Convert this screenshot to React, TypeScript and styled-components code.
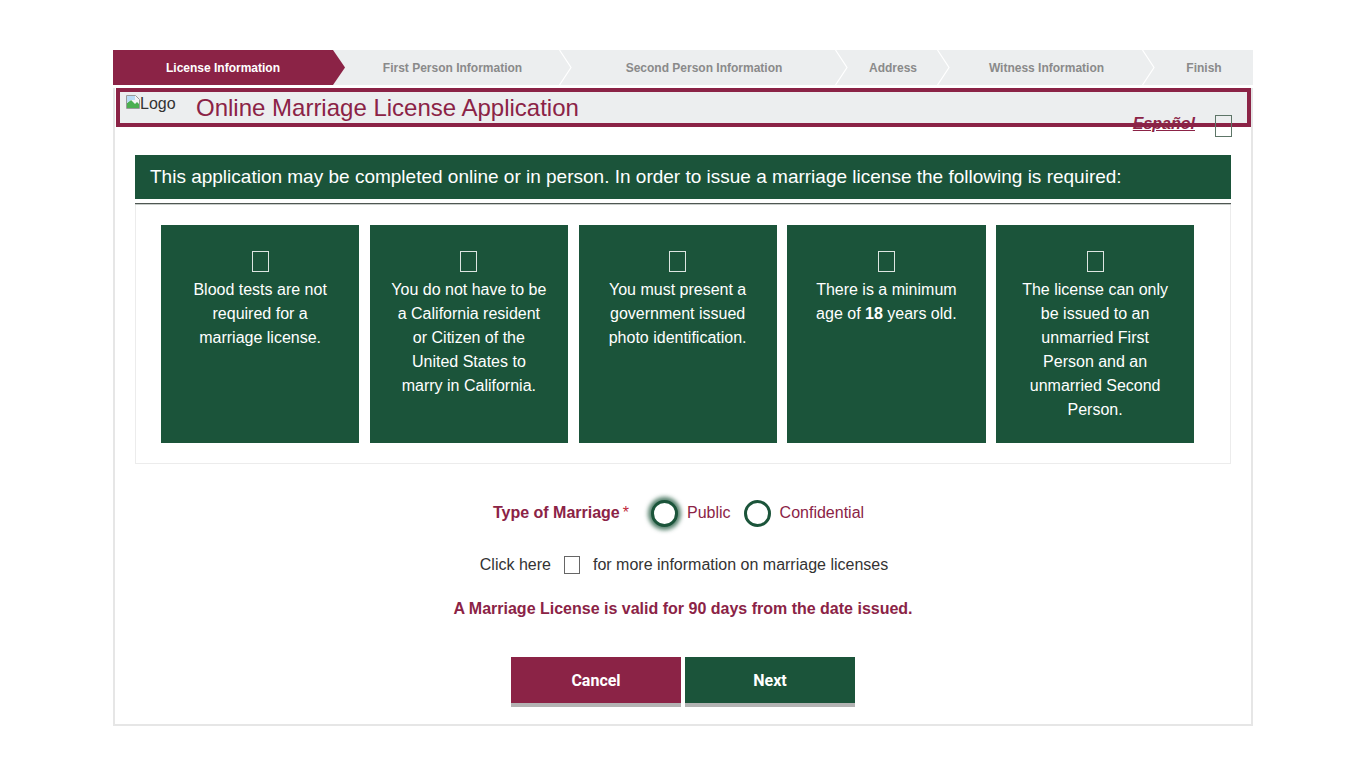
import React from "react";
import styled, { createGlobalStyle, css } from "styled-components";

const MAROON = "#8b2346";
const GREEN = "#1b543a";

const GlobalStyle = createGlobalStyle`
  html, body {
    margin: 0;
    padding: 0;
    background: #fff;
  }
  body {
    font-family: "Liberation Sans", Arial, sans-serif;
    color: #333;
  }
`;

const Page = styled.div`
  padding-top: 50px;
`;

const Container = styled.div`
  width: 1140px;
  margin: 0 auto;
`;

const StepBar = styled.div`
  display: flex;
  height: 35px;
  background: #eceeef;
`;

const Step = styled.div<{ $width: number; $active?: boolean; $last?: boolean }>`
  position: relative;
  flex: 0 0 ${(p) => p.$width}px;
  display: flex;
  align-items: center;
  justify-content: center;
  padding-right: ${(p) => (p.$last ? 0 : 12)}px;
  box-sizing: border-box;
  font-size: 12px;
  font-weight: bold;
  color: #8a8a8a;
  ${(p) =>
    p.$active &&
    css`
      background: ${MAROON};
      color: #fff;
      clip-path: polygon(
        0 0,
        calc(100% - 12px) 0,
        100% 50%,
        calc(100% - 12px) 100%,
        0 100%
      );
    `}
`;

const Chevron = styled.svg`
  position: absolute;
  right: 0;
  top: 0;
`;

const Body = styled.div`
  border: 2px solid #e6e6e6;
  border-top: none;
  padding-bottom: 17px;
`;

const TitleBox = styled.div`
  margin: 3px 0 0 1px;
  height: 39px;
  box-sizing: border-box;
  border: 4px solid ${MAROON};
  background: #eceeef;
  display: flex;
  align-items: center;
  padding-left: 5px;
`;

const Logo = styled.span`
  display: flex;
  align-items: flex-start;
  align-self: flex-start;
  margin-top: 3px;
  font-size: 16px;
  color: #333;
  width: 71px;
  svg {
    margin-right: -1px;
    margin-top: -1px;
  }
`;

const Title = styled.h1`
  margin: 0;
  font-size: 24px;
  font-weight: normal;
  color: ${MAROON};
  line-height: 28px;
`;

const LangRow = styled.div`
  display: flex;
  justify-content: flex-end;
  align-items: center;
  gap: 20px;
  margin-top: -12px;
  padding-right: 19px;
  height: 22px;
  position: relative;
`;

const LangLink = styled.a`
  font-size: 16px;
  font-weight: bold;
  font-style: italic;
  color: ${MAROON};
  text-decoration: underline;
  margin-top: -5px;
`;

const GlyphBox = styled.span<{ $color: string; $w: number; $h: number }>`
  display: inline-block;
  width: ${(p) => p.$w}px;
  height: ${(p) => p.$h}px;
  box-sizing: border-box;
  border: 1px solid ${(p) => p.$color};
`;

const Content = styled.div`
  padding: 0 20px;
`;

const Banner = styled.div`
  margin-top: 18px;
  background: ${GREEN};
  color: #fff;
  font-size: 19px;
  height: 44px;
  display: flex;
  align-items: center;
  padding-left: 15px;
`;

const Divider = styled.div`
  margin-top: 4px;
  height: 1px;
  background: #4f5753;
  border-bottom: 1px solid #c8cdca;
`;

const Panel = styled.div`
  border: 1px solid #ececec;
  border-top: none;
  padding: 20px 35px 20px 25px;
  display: grid;
  grid-template-columns: repeat(5, 198.25px);
  column-gap: 10.5px;
`;

const Card = styled.div`
  background: ${GREEN};
  color: #fff;
  height: 218px;
  box-sizing: border-box;
  padding: 26px 21px 0;
  text-align: center;
  font-size: 16px;
  line-height: 24px;
`;

const CardIcon = styled.div`
  height: 20px;
  margin-bottom: 7px;
  display: flex;
  justify-content: center;
`;

const Form = styled.div`
  display: flex;
  flex-direction: column;
  align-items: center;
`;

const RadioRow = styled.div`
  margin-top: 34px;
  display: flex;
  align-items: center;
  height: 30px;
  font-size: 16px;
  color: ${MAROON};
  padding-left: 4px;
`;

const Label = styled.span`
  font-weight: bold;
  margin-right: 22px;
  em {
    font-style: normal;
    color: #c0283a;
    margin-left: 3px;
    font-weight: normal;
  }
`;

const Radio = styled.span<{ $focus?: boolean }>`
  width: 27px;
  height: 27px;
  box-sizing: border-box;
  border-radius: 50%;
  border: 3px solid ${GREEN};
  background: #fff;
  margin-right: 9px;
  ${(p) =>
    p.$focus &&
    css`
      box-shadow: 0 0 4px 3px rgba(27, 84, 58, 0.75);
    `}
`;

const RadioText = styled.span`
  margin-right: 13px;
`;

const InfoRow = styled.div`
  margin-top: 28px;
  display: flex;
  align-items: center;
  font-size: 16px;
  color: #333;
  gap: 13px;
  padding-left: 2px;
`;

const Validity = styled.p`
  margin: 26px 0 0;
  font-size: 16px;
  font-weight: bold;
  color: ${MAROON};
`;

const Buttons = styled.div`
  margin-top: 39px;
  display: flex;
  gap: 4px;
`;

const Button = styled.button<{ $variant: "cancel" | "next" }>`
  width: 170px;
  height: 50px;
  border: none;
  border-bottom: 4px solid #b3b3b3;
  background: ${(p) => (p.$variant === "cancel" ? MAROON : GREEN)};
  color: #fff;
  font-family: Roboto, "Liberation Sans", sans-serif;
  font-weight: 700;
  font-size: 16px;
  cursor: pointer;
  padding: 0;
`;

const steps = [
  { label: "License Information", width: 232 },
  { label: "First Person Information", width: 227 },
  { label: "Second Person Information", width: 276 },
  { label: "Address", width: 102 },
  { label: "Witness Information", width: 205 },
  { label: "Finish", width: 98 },
];

const requirements: React.ReactNode[] = [
  "Blood tests are not required for a marriage license.",
  "You do not have to be a California resident or Citizen of the United States to marry in California.",
  "You must present a government issued photo identification.",
  <>
    There is a minimum age of <b>18</b> years old.
  </>,
  "The license can only be issued to an unmarried First Person and an unmarried Second Person.",
];

function BrokenImage() {
  return (
    <svg width="16" height="16" viewBox="0 0 16 16">
      <path d="M1.5 1.5h9l4 4v9h-13z" fill="#f4f4f4" stroke="#9a9a9a" />
      <path d="M2 9l4-3 4 4 2-2 2 2v4H2z" fill="#4caf50" />
      <path d="M2 2h8v4l-4 0-4 3z" fill="#b9dcf5" />
    </svg>
  );
}

export default function App() {
  return (
    <Page>
      <GlobalStyle />
      <Container>
        <StepBar>
          {steps.map((s, i) => (
            <Step
              key={s.label}
              $width={s.width}
              $active={i === 0}
              $last={i === steps.length - 1}
            >
              {s.label}
              {i > 0 && i < steps.length - 1 && (
                <Chevron width="13" height="35" viewBox="0 0 13 35">
                  <polyline
                    points="0.5,0 12,17.5 0.5,35"
                    fill="none"
                    stroke="#fff"
                    strokeWidth="1.2"
                  />
                </Chevron>
              )}
            </Step>
          ))}
        </StepBar>
        <Body>
          <TitleBox>
            <Logo>
              <BrokenImage />
              Logo
            </Logo>
            <Title>Online Marriage License Application</Title>
          </TitleBox>
          <LangRow>
            <LangLink href="#">Español</LangLink>
            <GlyphBox $color="#5d7567" $w={17} $h={22} />
          </LangRow>
          <Content>
            <Banner>
              This application may be completed online or in person. In order
              to issue a marriage license the following is required:
            </Banner>
            <Divider />
            <Panel>
              {requirements.map((text, i) => (
                <Card key={i}>
                  <CardIcon>
                    <GlyphBox $color="rgba(255,255,255,0.85)" $w={17} $h={21} />
                  </CardIcon>
                  {text}
                </Card>
              ))}
            </Panel>
          </Content>
          <Form>
            <RadioRow>
              <Label>
                Type of Marriage<em>*</em>
              </Label>
              <Radio $focus />
              <RadioText>Public</RadioText>
              <Radio />
              <RadioText>Confidential</RadioText>
            </RadioRow>
            <InfoRow>
              <span>Click here</span>
              <GlyphBox $color="#666" $w={16} $h={18} />
              <span>for more information on marriage licenses</span>
            </InfoRow>
            <Validity>
              A Marriage License is valid for 90 days from the date issued.
            </Validity>
            <Buttons>
              <Button $variant="cancel">Cancel</Button>
              <Button $variant="next">Next</Button>
            </Buttons>
          </Form>
        </Body>
      </Container>
    </Page>
  );
}
